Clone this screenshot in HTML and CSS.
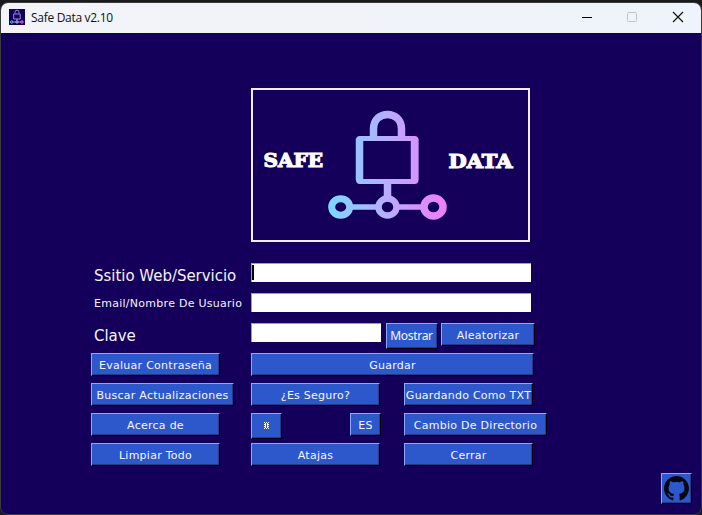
FILE: index.html
```html
<!DOCTYPE html>
<html lang="es">
<head>
<meta charset="utf-8">
<title>Safe Data v2.10</title>
<link rel="stylesheet" href="styles.css">
</head>
<body>
<div class="window">
  <header class="titlebar">
    <svg class="app-icon" viewBox="0 0 16 16" fill="none">
      <path fill="#14005a" d="M0 0h16v16H0z"/>
      <path d="M6 4.500V3.200a2 2 0 0 1 4 0v1.300M4.700 5h6.500v5H4.700zM8 10v2M4 13h8" stroke="#b4adf5" stroke-width=".8"/>
      <circle cx="2.700" cy="13" r="1.200" stroke="#62cbea"/>
      <circle cx="8" cy="13" r="1.200" stroke="#aaa5ef"/>
      <circle cx="13" cy="13" r="1.200" stroke="#e478e8"/>
    </svg>
    <span class="title">Safe Data v2.10</span>
    <svg class="controls" width="120" height="30" viewBox="0 0 120 30" fill="none">
      <path d="M0 14.500h10" stroke="#000"/>
      <rect x="45.500" y="9.500" width="9" height="9" rx="1" stroke="#bfc1c8"/>
      <path d="M91 9l10 10M101 9l-10 10" stroke="#111" stroke-width="1.200"/>
    </svg>
  </header>
  <main class="content">
    <svg class="logo" width="279" height="154" viewBox="0 0 279 154" fill="none">
      <defs>
        <linearGradient id="g" gradientUnits="userSpaceOnUse" x1="77" y1="0" x2="196" y2="0">
          <stop offset="0" stop-color="#7cd8ff"/>
          <stop offset=".5" stop-color="#b8adff"/>
          <stop offset="1" stop-color="#f07cf8"/>
        </linearGradient>
      </defs>
      <rect x="1" y="1" width="277" height="152" stroke="#f0edf7" stroke-width="2"/>
      <g stroke="url(#g)">
        <path d="M122.500 51V41C122.500 21.500 150.500 21.500 150.500 41V51" stroke-width="7.500"/>
        <path d="M109 50.500H163.500Q165 50.500 165 52V92Q165 93.500 163.500 93.500H109Q107.500 93.500 107.500 92V52Q107.500 50.500 109 50.500z" stroke-width="5"/>
        <path d="M108.500 50.500V92M163.500 50.500V92" stroke-width="7.500"/>
        <path d="M136.500 94V109" stroke-width="7.500"/>
        <path d="M100 119L125 119M147 119L171 119" stroke-width="5.500"/>
        <ellipse cx="89.700" cy="119" rx="9" ry="8.200" stroke-width="7"/>
        <ellipse cx="136.500" cy="119" rx="9" ry="8.500" stroke-width="6.500"/>
        <ellipse cx="182.500" cy="119" rx="9.500" ry="9" stroke-width="7.500"/>
      </g>
      <text class="logo-text" x="12.500" y="78.500" textLength="59.500" lengthAdjust="spacingAndGlyphs">SAFE</text>
      <text class="logo-text" x="197.500" y="79.500" textLength="64" lengthAdjust="spacingAndGlyphs">DATA</text>
    </svg>

    <form class="form">
      <div class="row"><label class="label">Ssitio Web/Servicio</label><div class="input"><i class="caret"></i></div></div>
      <div class="row"><label class="label label-small">Email/Nombre De Usuario</label><div class="input"></div></div>
      <div class="row">
        <label class="label">Clave</label>
        <div class="group"><div class="input input-short"></div><button type="button" class="btn show">Mostrar</button><button type="button" class="btn random">Aleatorizar</button></div>
      </div>
      <div class="row"><button type="button" class="btn">Evaluar Contraseña</button><button type="button" class="btn save">Guardar</button></div>
      <div class="row"><button type="button" class="btn wide">Buscar Actualizaciones</button><button type="button" class="btn">¿Es Seguro?</button><button type="button" class="btn tight">Guardando Como TXT</button></div>
      <div class="row">
        <button type="button" class="btn">Acerca de</button>
        <div class="pair"><button type="button" class="btn square tall" aria-label="Tema"><svg width="5" height="7" viewBox="0 0 5 7" fill="#fff" shape-rendering="crispEdges"><path d="M0 0h1v1H0zM2 0h1v1H2zM4 0h1v1H4zM1 1h1v5H1zM3 1h1v5H3zM0 2h1v1H0zM4 2h1v1H4zM0 4h1v1H0zM4 4h1v1H4zM0 6h1v1H0zM2 6h1v1H2zM4 6h1v1H4z"/></svg></button><button type="button" class="btn square">ES</button></div>
        <button type="button" class="btn wide">Cambio De Directorio</button>
      </div>
      <div class="row"><button type="button" class="btn">Limpiar Todo</button><button type="button" class="btn">Atajas</button><button type="button" class="btn">Cerrar</button></div>
    </form>

    <button type="button" class="btn github" aria-label="GitHub">
      <svg width="25" height="25" viewBox="0 0 16 16"><path fill="#05070f" d="M8 0C3.580 0 0 3.580 0 8c0 3.540 2.290 6.530 5.470 7.590.4.070.55-.17.55-.38 0-.19-.01-.82-.01-1.490-2.010.37-2.530-.49-2.690-.94-.09-.23-.48-.94-.82-1.130-.28-.15-.68-.52-.01-.53.63-.01 1.080.58 1.230.82.72 1.210 1.870.87 2.330.66.070-.52.28-.87.51-1.070-1.780-.2-3.640-.89-3.640-3.950 0-.87.31-1.590.82-2.150-.08-.2-.36-1.020.08-2.120 0 0 .67-.21 2.200.82.64-.18 1.320-.27 2-.27s1.360.09 2 .27c1.530-1.040 2.200-.82 2.200-.82.44 1.100.16 1.920.08 2.120.51.56.82 1.270.82 2.150 0 3.070-1.870 3.750-3.650 3.950.29.25.54.73.54 1.480 0 1.070-.01 1.930-.01 2.200 0 .21.15.46.55.38A8.010 8.010 0 0 0 16 8c0-4.420-3.580-8-8-8z"/></svg>
    </button>
  </main>
</div>
</body>
</html>
```
FILE: styles.css
```css
* { box-sizing: border-box; }
body {
  margin: 0;
  padding-top: 2px;
  height: 515px;
  overflow: hidden;
  background: #1a1a1a;
  font-family: "DejaVu Sans", sans-serif;
}
.window {
  width: 702px;
  height: 513px;
  border: 1px solid #3a3a3c;
  border-radius: 8px;
  overflow: hidden;
  background: #14005a;
}
.titlebar {
  height: 30px;
  display: flex;
  align-items: center;
  padding-left: 8px;
  background: linear-gradient(90deg, #f3f3f8, #eff3fb);
}
.app-icon { width: 16px; height: 16px; margin-top: -2px; }
.title {
  margin: -2px 0 0 6px;
  font: 12px "Open Sans", sans-serif;
  letter-spacing: -0.3px;
  color: #111;
}
.controls { margin-left: auto; margin-right: -1px; }
.content {
  height: 481px;
  display: flex;
  flex-direction: column;
  padding: 55px 9px 0 90px;
}
.logo { display: block; margin-left: 160px; flex: none; }
.logo-text {
  font: bold 18px "DejaVu Serif", serif;
  fill: #fff;
  stroke: #fff;
  stroke-width: 1.1px;
}
.form { margin: 21px 0 0; }
.row {
  display: grid;
  grid-template-columns: 160px 153px 1fr;
  height: 30px;
  align-items: start;
}
.label {
  padding: 4px 0 0 3px;
  font-size: 15px;
  line-height: 19px;
  letter-spacing: -0.03px;
  color: #f4f1fb;
  white-space: nowrap;
}
.label-small { padding-top: 1px; font-size: 11px; letter-spacing: 0.27px; }
.input {
  width: 280px;
  height: 19px;
  background: #fff;
  border-top: 1px solid #a0a0a0;
  border-left: 1px solid #a0a0a0;
}
.input-short { width: 130px; margin-right: 5px; }
.caret { display: block; width: 2px; height: 15px; margin-top: 1px; background: #000; }
.group { display: flex; width: 284px; }
.pair { display: flex; width: 130px; justify-content: space-between; }
.btn {
  flex: none;
  width: 129px;
  height: 23px;
  margin: 0;
  padding: 3px 0 0;
  border: solid;
  border-width: 1px;
  border-color: #8fa9f8 #000 #000 #8fa9f8;
  border-radius: 0;
  background: #2d58cc;
  box-shadow: inset -1px -1px #203c86;
  color: #f5f7ff;
  font: 11px/18px "DejaVu Sans", sans-serif;
  letter-spacing: 0.26px;
  text-align: center;
  white-space: nowrap;
  overflow: hidden;
}
.show { width: 52px; height: 26px; margin-right: 3px; padding: 0 1px 1px 0; font: 12px "Noto Sans", sans-serif; letter-spacing: -0.3px; }
.random { width: 94px; }
.save { width: 283px; }
.wide { width: 143px; }
.square { width: 31px; }
.tall { height: 26px; padding: 0 1px 2px 0; }
.square svg { display: block; margin: 0 auto; }
.github {
  width: 31px;
  height: 31px;
  padding: 0;
  margin: 0;
  align-self: flex-end;
}
.github svg { display: block; margin: 0 auto; }
```
